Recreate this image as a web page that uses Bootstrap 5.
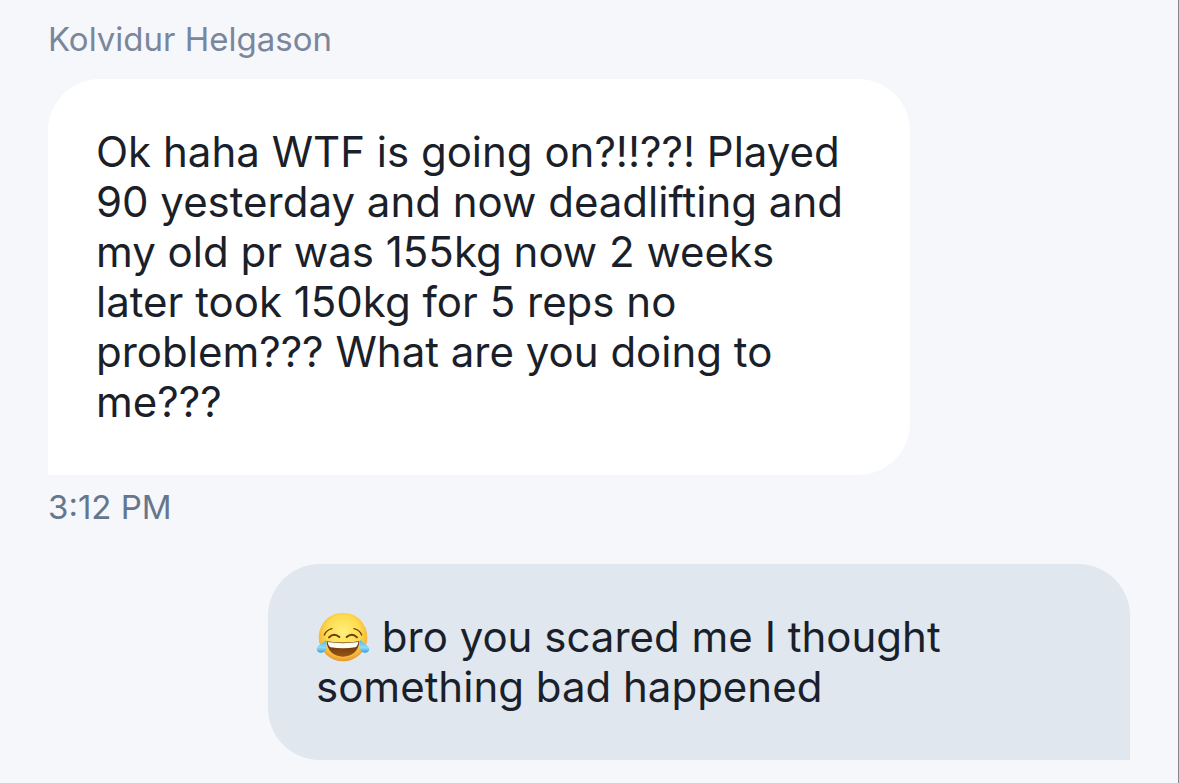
<!DOCTYPE html>
<html lang="en">
<head>
<meta charset="utf-8">
<meta name="viewport" content="width=device-width, initial-scale=1">
<title>Conversation</title>
<link href="https://cdn.jsdelivr.net/npm/bootstrap@5.3.0/dist/css/bootstrap.min.css" rel="stylesheet">
<style>
  body { background: #f5f7fb; color: #1b1f2a; font-family: Inter, "Liberation Sans", sans-serif; }
  .chat { gap: 38px; padding: 20px 48px 22px; border-right: 1px solid #85888e; min-height: 100vh; }
  .sender, .sent-at { font-size: 33px; line-height: 38px; }
  .sender { color: #7b869b; margin-bottom: 21px; }
  .sent-at { color: #66768c; margin-top: 13px; }
  .bubble { width: 862px; max-width: 100%; padding: 48px; font-size: 42px; line-height: 50px; border-radius: 52px; }
  .bubble-in { background: #fff; border-bottom-left-radius: 0; }
  .bubble-out { background: #e1e7ef; border-bottom-right-radius: 0; }
  .emoji { width: 54px; height: 50px; vertical-align: -10px; }
</style>
</head>
<body>
<main class="chat d-flex flex-column">
  <article class="d-flex flex-column align-items-start">
    <div class="sender">Kolvidur Helgason</div>
    <div class="bubble bubble-in">Ok haha WTF is going on?!!??! Played 90 yesterday and now deadlifting and my old pr was 155kg now 2 weeks later took 150kg for 5 reps no problem??? What are you doing to me???</div>
    <time class="sent-at" datetime="15:12">3:12 PM</time>
  </article>
  <article class="d-flex flex-column align-items-end">
    <div class="bubble bubble-out"><svg class="emoji" viewBox="52 37 162 150" role="img" aria-label="Face with tears of joy">
      <defs>
        <radialGradient id="face" cx=".5" cy=".4" r=".62">
          <stop offset="0" stop-color="#fff07a"/>
          <stop offset=".55" stop-color="#fddc50"/>
          <stop offset=".82" stop-color="#f6b83b"/>
          <stop offset="1" stop-color="#e58d29"/>
        </radialGradient>
        <linearGradient id="mouth" x1="0" y1="0" x2="0" y2="1">
          <stop offset="0" stop-color="#5c2c08"/>
          <stop offset="1" stop-color="#9a5716"/>
        </linearGradient>
        <linearGradient id="tear" x1="0" y1="0" x2="0" y2="1">
          <stop offset="0" stop-color="#56b5e8"/>
          <stop offset=".6" stop-color="#8cdcf7"/>
          <stop offset="1" stop-color="#3a9fdc"/>
        </linearGradient>
      </defs>
      <circle cx="133" cy="112" r="73" fill="url(#face)"/>
      <g fill="none" stroke="#6b3d0c" stroke-linecap="round">
        <path d="M77 106Q83 91 100 87M166 87Q183 91 189 106" stroke-width="4"/>
        <path d="M91 113Q106 98 122 112M144 112Q160 98 175 113" stroke-width="6"/>
      </g>
      <path d="M84 125Q133 132 182 125C181 153 160 171 133 171S85 153 84 125Z" fill="url(#mouth)"/>
      <path d="M87 127Q133 134 179 127Q178 139 170 143Q133 149 96 143Q88 139 87 127Z" fill="#fffdf3"/>
      <path d="M82 121C86 137 84 158 68 159C57 160 51 151 56 143C62 134 73 130 82 121Z" fill="url(#tear)"/>
      <path d="M184 121C180 137 182 158 198 159C209 160 215 151 210 143C204 134 193 130 184 121Z" fill="url(#tear)"/>
    </svg> bro you scared me I thought something bad happened</div>
  </article>
</main>
<script src="https://cdn.jsdelivr.net/npm/bootstrap@5.3.0/dist/js/bootstrap.bundle.min.js"></script>
</body>
</html>
